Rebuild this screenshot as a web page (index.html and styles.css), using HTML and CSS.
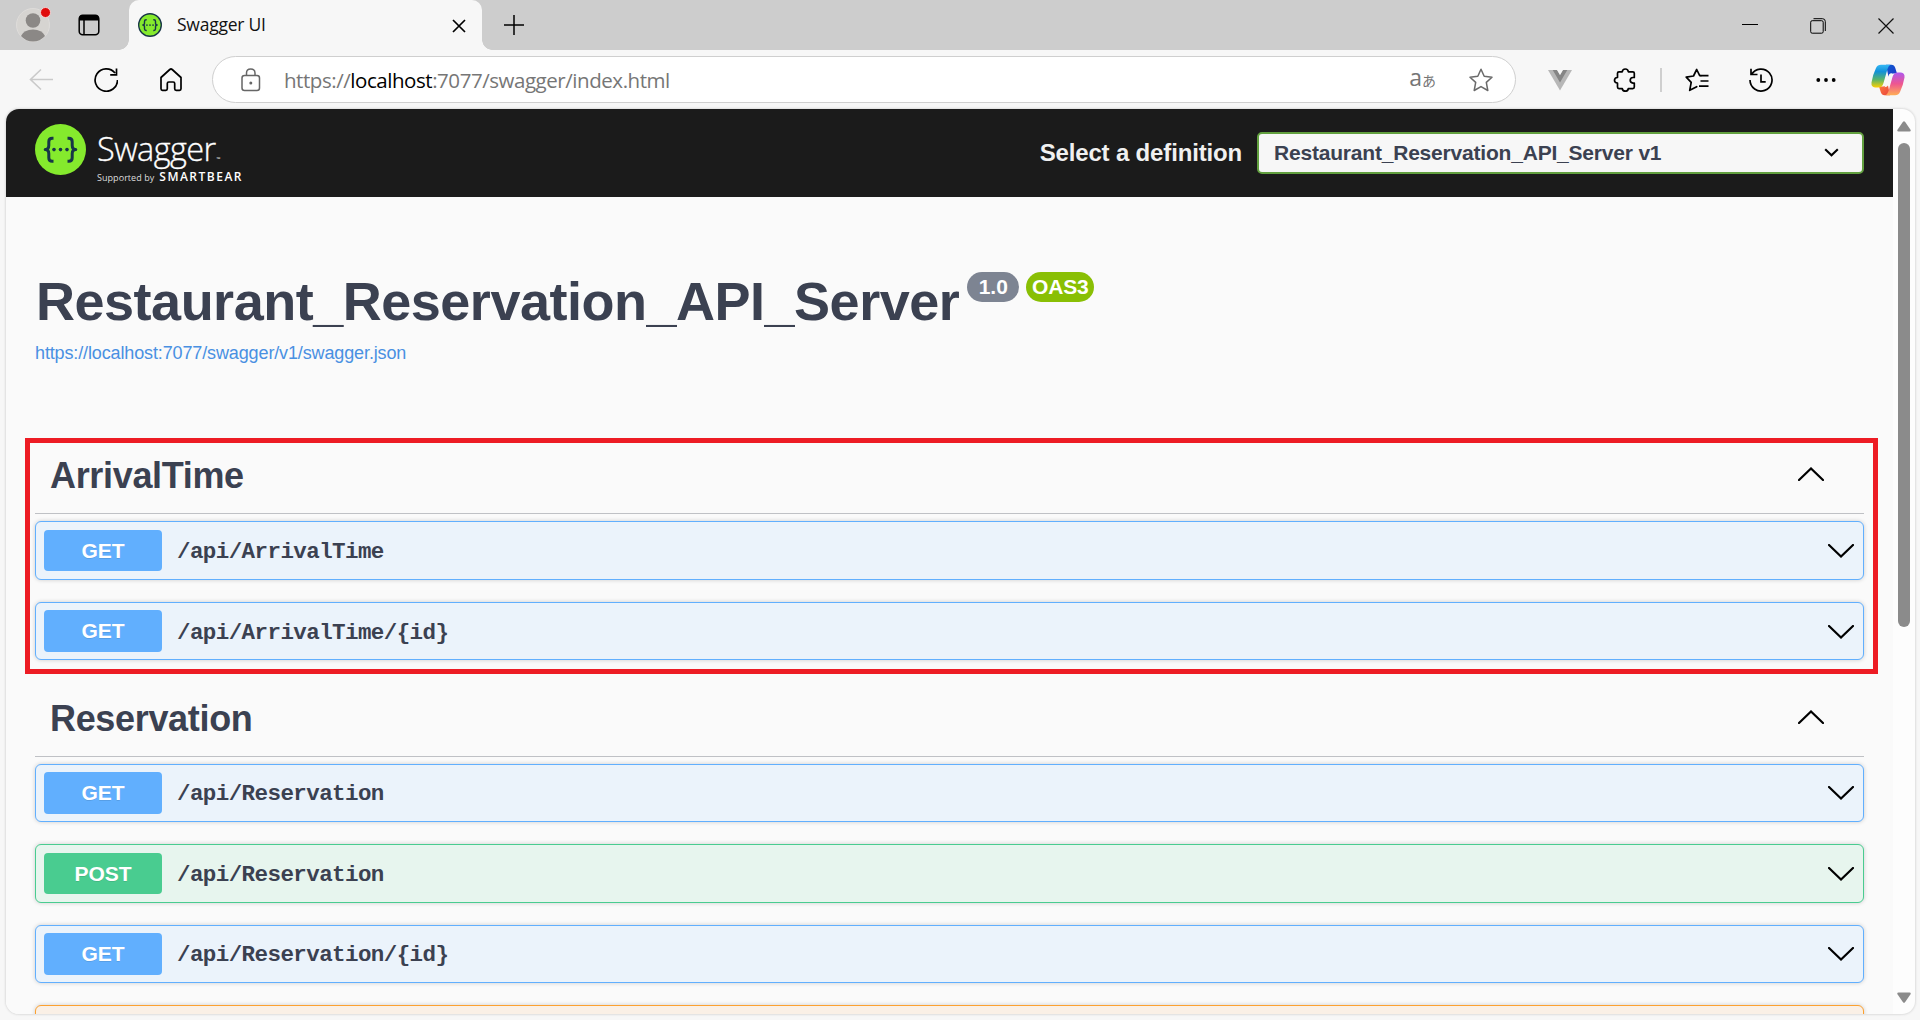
FILE: index.html
```html
<!DOCTYPE html>
<html lang="en">
<head>
<meta charset="utf-8">
<title>Swagger UI</title>
<link rel="stylesheet" href="styles.css">
</head>
<body>
<svg class="defs" width="0" height="0" aria-hidden="true">
  <symbol id="braces" viewBox="0 0 51 51">
    <g fill="none" stroke="#173647" stroke-width="3" stroke-linejoin="round">
      <path d="M18.5 14.2h-1.3q-3.4 0-3.4 3.6v3.4q0 4.3-3.6 4.3q3.6 0 3.6 4.3v3.9q0 3.600 3.400 3.600h1.3"/>
      <path d="M32.500 14.200h1.300q3.400 0 3.400 3.600v3.400q0 4.300 3.600 4.300q-3.600 0-3.600 4.300v3.900q0 3.600-3.400 3.600h-1.300"/>
    </g>
    <g fill="#173647"><circle cx="19" cy="25.600" r="1.800"/><circle cx="25.500" cy="25.600" r="1.800"/><circle cx="32" cy="25.600" r="1.800"/></g>
  </symbol>
  <symbol id="down" viewBox="0 0 26 14"><path d="M1 1l12 11.500L25 1" fill="none" stroke="#000" stroke-width="2.200" stroke-linecap="round"/></symbol>
  <symbol id="up" viewBox="0 0 26 14"><path d="M1 13L13 1.500 25 13" fill="none" stroke="#000" stroke-width="2.200" stroke-linecap="round"/></symbol>
</svg>

<header class="tabstrip">
  <div class="profile">
    <svg width="34" height="34" viewBox="0 0 34 34"><circle cx="17" cy="17" r="16.500" fill="#d6d4d1" stroke="#dedcda"/><circle cx="17" cy="12.500" r="7.300" fill="#8b8886"/><path d="M5 28q3-6.500 12-6.500T29 28q-5 5.500-12 5.500T5 28z" fill="#8b8886"/></svg>
    <span class="alert"></span>
  </div>
  <svg class="tabmenu" width="22" height="22" viewBox="0 0 22 22"><rect x="1.200" y="1.200" width="19.600" height="19.600" rx="3.500" fill="none" stroke="#000" stroke-width="1.500"/><path d="M1 6.500V4.500Q1 1 4.500 1h13Q21 1 21 4.500v2z"/><path d="M6 6v15" stroke="#000" stroke-width="1.500"/></svg>
  <div class="tab">
    <svg width="24" height="24" viewBox="0 0 51 51"><circle cx="25.500" cy="25.500" r="24" fill="#85ea2d" stroke="#173647" stroke-width="3"/><use href="#braces"/></svg>
    <span class="tab-title">Swagger UI</span>
    <svg class="tab-close" width="14" height="14" viewBox="0 0 14 14"><path d="M1 1l12 12M13 1L1 13" stroke="#000" stroke-width="1.700"/></svg>
  </div>
  <svg class="newtab" width="20" height="20" viewBox="0 0 20 20"><path d="M10 0v20M0 10h20" stroke="#000" stroke-width="1.500"/></svg>
  <div class="window-buttons">
    <svg width="16" height="16" viewBox="0 0 16 16"><path d="M0 6.500h16" stroke="#000"/></svg>
    <svg width="16" height="16" viewBox="0 0 16 16"><g fill="none" stroke="#000"><rect x=".7" y="2.700" width="12.500" height="12.500" rx="1.500"/><path d="M3.500 .7h9q2.800 0 2.800 2.800v9.500"/></g></svg>
    <svg width="16" height="16" viewBox="0 0 16 16"><path d="M.5.5l15 15M15.500.5l-15 15" stroke="#111" stroke-width="1.200"/></svg>
  </div>
</header>

<nav class="toolbar">
  <svg class="icon back" width="24" height="24" viewBox="0 0 24 24"><path d="M12 1.500L1.500 11.500 12 21.500M1.500 11.500H24" fill="none" stroke="#cacaca" stroke-width="1.600"/></svg>
  <svg class="icon" width="24" height="24" viewBox="0 0 24 24"><path d="M21 5A11.200 11.200 0 1 0 23.500 12M22.500.5v6.300h-6.300" fill="none" stroke="#000" stroke-width="1.700"/></svg>
  <svg class="icon" width="24" height="24" viewBox="0 0 24 24"><path d="M2 9.500L10.800 1.500q1.200-1 2.400 0L22 9.500v11.300q0 1.500-1.500 1.500h-3.300q-1.500 0-1.500-1.500v-5.300q0-1.500-1.500-1.500h-4.400q-1.500 0-1.500 1.500v5.300q0 1.500-1.500 1.500H3.500Q2 22.300 2 20.800z" fill="none" stroke="#000" stroke-width="1.700" stroke-linejoin="round"/></svg>
  <div class="address">
    <svg width="20" height="24" viewBox="0 0 20 24"><rect x="1" y="7.500" width="17.500" height="15" rx="2.500" fill="none" stroke="#666" stroke-width="1.500"/><path d="M5.500 7.500V5q0-4 4.200-4T14 5v2.500" fill="none" stroke="#666" stroke-width="1.500"/><circle cx="9.800" cy="15" r="1.500" fill="#666"/></svg>
    <span class="url">https://<b>localhost</b>:7077/swagger/index.html</span>
    <span class="translate"><span>a</span><span class="kana">あ</span></span>
    <svg class="fav" width="24" height="24" viewBox="0 0 24 24"><path d="M12 1.200l3.200 7 7.800 1-5.700 5.200 1.500 8.100L12 18.600l-6.800 3.900 1.500-8.100L1 9.200l7.800-1z" fill="none" stroke="#6a6a6a" stroke-width="1.500" stroke-linejoin="round"/></svg>
  </div>
  <svg class="icon vue" width="24" height="24" viewBox="0 0 24 24"><path d="M0 2h24L12 22.500z" fill="#b7b7b7"/><path d="M4.700 2H9l3 5 3-5h4.300L12 14.500z" fill="#858585"/><path d="M9 2h6l-3 5z" fill="#f7f7f7"/></svg>
  <svg class="icon" width="24" height="24" viewBox="0 0 24 24"><path d="M4.500 5.200Q4.500 3.800 6 3.800h3.300Q9.500 1 12.300 1t3 2.800h4.500q1.500 0 1.500 1.500v4.200h-1.300q-2.800.3-2.800 2.800t2.800 2.800h1.300v4q0 1.500-1.500 1.500h-4.500q-.2 2.600-3 2.600t-3-2.600H6q-1.500 0-1.500-1.500v-3.900Q1.500 14.900 1.500 12.300t3-2.800z" fill="none" stroke="#000" stroke-width="1.700" stroke-linejoin="round"/></svg>
  <span class="divider"></span>
  <svg class="icon favorites" width="24" height="24" viewBox="0 0 24 24"><path d="M15.700 7.700h-1L11.700 1.500 8.500 8l-7.300 1.200 5 5.200-1.500 7.900 7-3.600" fill="none" stroke="#000" stroke-width="1.700" stroke-linejoin="round" stroke-linecap="round"/><path d="M15.500 7.700H23.500M15.500 13h8M14 18.200h9.500" stroke="#000" stroke-width="1.700"/></svg>
  <svg class="icon history" width="24" height="24" viewBox="0 0 24 24"><path d="M2.500 6.500A11 11 0 1 1 1 12M2 .8V6.500h6.500M12 6.500v7.300h4.700" fill="none" stroke="#000" stroke-width="1.700"/></svg>
  <svg class="icon" width="24" height="24" viewBox="0 0 24 24"><circle cx="4.300" cy="12" r="1.900"/><circle cx="12" cy="12" r="1.900"/><circle cx="19.700" cy="12" r="1.900"/></svg>
  <svg class="copilot" width="34" height="32" viewBox="0 0 34 32">
    <defs>
      <linearGradient id="ca" x1="0" y1="0" x2="0" y2="1"><stop offset="0" stop-color="#35b8f5"/><stop offset=".3" stop-color="#1191d8"/><stop offset=".65" stop-color="#59b46a"/><stop offset="1" stop-color="#ffd000"/></linearGradient>
      <linearGradient id="cb" x1="0" y1="0" x2="0" y2="1"><stop offset="0" stop-color="#ae58ee"/><stop offset=".5" stop-color="#ee5690"/><stop offset="1" stop-color="#ffae55"/></linearGradient>
      <linearGradient id="cc" x1="0" y1="0" x2="1" y2="1"><stop offset="0" stop-color="#0c5fd0"/><stop offset="1" stop-color="#2133c9"/></linearGradient>
      <linearGradient id="cd" x1="0" y1="0" x2="1" y2="1"><stop offset="0" stop-color="#ff813f"/><stop offset="1" stop-color="#e9423c"/></linearGradient>
    </defs>
    <path d="M15 .8h5.500q2.700 0 3.700 3l1.800 5.700h-4q-3.500 0-4.500 3.500z" fill="url(#cc)"/>
    <path d="M19 31.200h-5.500q-2.700 0-3.700-3L8 22.500h4q3.500 0 4.500-3.500z" fill="url(#cd)"/>
    <path d="M10 .8h9.500q-2 1-3 4.200l-4 14q-1.200 4.500-5.200 4.500H4q-4-.5-3.500-5Q2 10 5 4 6.500.8 10 .8z" fill="url(#ca)"/>
    <path d="M24 31.200h-9.500q2-1 3-4.200l4-14q1.200-4.500 5.200-4.500H30q4 .5 3.500 5Q32 22 29 28q-1.500 3.200-5 3.200z" fill="url(#cb)"/>
    <path d="M18 10.500q1-1.500 3-1.500-1 1.500-1.500 3.500l-2.500 9q-1 1.800-3.500 1.800 1-1.300 1.500-3.300z" fill="#f7f7f7"/>
  </svg>
</nav>

<div class="page">
  <main class="document">
    <div class="topbar">
      <svg class="logo-mark" width="51" height="51" viewBox="0 0 51 51"><circle cx="25.500" cy="25.500" r="25.500" fill="#85ea2d"/><use href="#braces"/></svg>
      <div class="wordmark">
        <div class="name"><span class="swagger">Swagger</span><span class="tm">™</span></div>
        <div class="byline"><span class="supported">Supported by</span><span class="smartbear">SMARTBEAR</span></div>
      </div>
      <span class="select-label">Select a definition</span>
      <div class="select"><span>Restaurant_Reservation_API_Server v1</span><svg width="15" height="9" viewBox="0 0 15 9"><path d="M1.200 1.200l6.300 6 6.300-6" fill="none" stroke="#000" stroke-width="2.100"/></svg></div>
    </div>

    <section class="info">
      <h1>Restaurant_Reservation_API_Server</h1>
      <div class="badges"><span class="badge version">1.0</span><span class="badge oas">OAS3</span></div>
      <a class="spec-link">https://localhost:7077/swagger/v1/swagger.json</a>
    </section>

    <section class="group highlighted">
      <h2>ArrivalTime<svg width="26" height="14"><use href="#up"/></svg></h2>
      <div class="operation get"><span class="method">GET</span><span class="path">/api/ArrivalTime</span><svg width="26" height="14"><use href="#down"/></svg></div>
      <div class="operation get"><span class="method">GET</span><span class="path">/api/ArrivalTime/{id}</span><svg width="26" height="14"><use href="#down"/></svg></div>
    </section>
    <section class="group second">
      <h2>Reservation<svg width="26" height="14"><use href="#up"/></svg></h2>
      <div class="operation get"><span class="method">GET</span><span class="path">/api/Reservation</span><svg width="26" height="14"><use href="#down"/></svg></div>
      <div class="operation post"><span class="method">POST</span><span class="path">/api/Reservation</span><svg width="26" height="14"><use href="#down"/></svg></div>
      <div class="operation get"><span class="method">GET</span><span class="path">/api/Reservation/{id}</span><svg width="26" height="14"><use href="#down"/></svg></div>
      <div class="operation put"></div>
    </section>
  </main>
  <aside class="scrollbar">
    <svg width="14" height="11" viewBox="0 0 14 11"><path d="M6 .8q1-1 2 0l5.500 8q.8 1.700-1 1.700h-11q-1.800 0-1-1.700z" fill="#8b8b8b"/></svg>
    <div class="thumb"></div>
    <svg class="arrow-down" width="14" height="11" viewBox="0 0 14 11"><path d="M6 10.200q1 1 2 0l5.500-8q.8-1.700-1-1.700h-11q-1.800 0-1 1.700z" fill="#8b8b8b"/></svg>
  </aside>
</div>
</body>
</html>
```
FILE: styles.css
```css
* { box-sizing: border-box; }
body {
  margin: 0;
  width: 1920px;
  height: 1020px;
  overflow: hidden;
  background: #f7f7f7;
  font-family: "Liberation Sans", Arial, sans-serif;
  color: #3b4151;
}
svg { display: block; flex: none; }
.defs { position: absolute; }

/* Browser tab strip */
.tabstrip { display: flex; align-items: center; height: 50px; background: #cdcdcd; padding-left: 16px; }
.profile { position: relative; width: 34px; height: 34px; }
.alert {
  position: absolute; left: 24px; top: -1px; width: 11px; height: 11px;
  border-radius: 50%; background: #e00b0b; border: 1px solid #f3d5d5;
}
.tabmenu { margin-left: 28px; }
.tab {
  position: relative; display: flex; align-items: center; align-self: stretch;
  width: 353px; margin-left: 29px; padding-left: 9px;
  background: #f7f7f7; border-radius: 10px 10px 0 0;
}
.tab::before, .tab::after { content: ""; position: absolute; bottom: 0; width: 10px; height: 10px; }
.tab::before { left: -10px; background: radial-gradient(circle at 0 0, transparent 9.500px, #f7f7f7 10px); }
.tab::after { right: -10px; background: radial-gradient(circle at 100% 0, transparent 9.500px, #f7f7f7 10px); }
.tab-title { margin: 0 0 2px 15px; font: 17.500px "Open Sans", sans-serif; color: #111; letter-spacing: -.25px; white-space: nowrap; }
.tab-close { margin: 2px 16px 0 auto; }
.newtab { margin-left: 22px; }
.window-buttons { display: flex; gap: 52px; margin: 1px 26px 0 auto; }

/* Toolbar */
.toolbar { display: flex; align-items: center; height: 59px; padding-left: 29px; }
.icon { margin-left: 41px; }
.icon.back { margin-left: 0; }
.address {
  display: flex; align-items: center; width: 1304px; height: 47px; margin-left: 29px; padding-left: 28px;
  background: #fff; border: 1px solid #cfcfcf; border-radius: 24px;
}
.url { margin-left: 23px; font: 20.500px "Open Sans", sans-serif; letter-spacing: -.45px; color: #767676; white-space: nowrap; }
.url b { font-weight: 400; color: #000; }
.translate { display: flex; align-items: baseline; margin: -3px 0 0 auto; font: 23px/26px "Open Sans", sans-serif; color: #767676; }
.kana { font: 14px/24px "Noto Sans CJK JP", sans-serif; }
.fav { margin: 0 22px 0 33px; }
.icon.vue { margin-left: 32px; }
.divider { width: 2px; height: 24px; margin-left: 23px; background: #cfcfcf; }
.icon.favorites { margin-left: 23px; }
.icon.history { margin-left: 40px; }
.copilot { margin-left: 33px; }

/* Web page frame */
.page {
  display: flex; width: 1909px; height: 905px; margin-left: 6px; overflow: hidden;
  background: #fdfdfd; border-radius: 13px; box-shadow: 0 0 2px 1px #dedede;
}
.document { width: 1887px; background: #fafafa; overflow: hidden; }
.topbar { display: flex; height: 88px; padding: 0 29px; background: #1b1b1b; color: #fff; }
.logo-mark { margin-top: 15px; }
.wordmark { margin: 15px auto 0 11px; font-family: "Open Sans", sans-serif; white-space: nowrap; }
.name { display: flex; align-items: baseline; height: 49px; line-height: 49px; }
.swagger { font-size: 32.500px; font-weight: 300; letter-spacing: -.6px; -webkit-text-stroke: .3px #fff; }
.tm { font-size: 5px; margin-left: 1px; }
.byline { display: flex; align-items: baseline; line-height: 14px; margin-top: -3px; }
.supported { font-size: 9px; letter-spacing: .05px; color: #ddd; }
.smartbear { margin-left: 5px; font-size: 12px; font-weight: 600; letter-spacing: 1.500px; }
.select-label { margin: 29px 15px 0 0; font-size: 24px; line-height: 30px; font-weight: 700; letter-spacing: -.16px; color: #f0f0f0; white-space: nowrap; }
.select {
  display: flex; align-items: center; justify-content: space-between; width: 607px; height: 42px; margin-top: 23px;
  padding: 0 23px 1px 15px; border: 2px solid #62a03f; border-radius: 5px;
  background: #f7f7f7; color: #3b4151; font-size: 21px; font-weight: 700; letter-spacing: -.2px; white-space: nowrap;
}

/* API info */
.info { display: grid; grid-template-columns: max-content 1fr; padding: 75px 29px 0; height: 241px; align-content: start; }
h1 { margin: -1px 0 1px 1px; font-size: 54px; line-height: 60px; font-weight: 700; letter-spacing: -.49px; }
.badges { display: flex; gap: 7px; margin-left: 8px; }
.badge { height: 30px; border-radius: 15px; background: #7d8492; color: #fff; font-size: 21px; line-height: 29px; font-weight: 700; text-align: center; }
.version { width: 52px; }
.oas { width: 68px; background: #89bf04; letter-spacing: -.2px; }
.spec-link { font-size: 18px; line-height: 22px; letter-spacing: -.13px; color: #4990e2; margin-top: 10px; }

/* Operation groups */
.group { margin: 0 19px; padding: 0 10px; width: 1853px; }
.highlighted { border: 5px solid #ed1c24; padding: 0 9px 0 5px; height: 236px; }
h2 {
  display: flex; align-items: center; justify-content: space-between;
  height: 71px; margin: 0 0 7.200px; padding: 2px 40px 6px 15px;
  border-bottom: 1px solid #bfc1c5; font-size: 36px; line-height: 42px; font-weight: 700; letter-spacing: -.33px;
}
h2 svg { margin-bottom: 5px; }
.second { padding-right: 14px; padding-top: 12px; }
.second h2 { margin-bottom: 6.600px; }
.operation {
  display: flex; align-items: center; height: 58.700px; margin-bottom: 21.800px; padding: 0 9px 0 8px;
  border: 1px solid #61affe; border-radius: 6px; background: #ebf3fb; box-shadow: 0 0 4px rgba(0, 0, 0, .19);
}
.operation svg { margin-top: 1px; }
.method {
  width: 118px; height: 41.500px; border-radius: 4px; background: #61affe; color: #fff;
  font-size: 21px; line-height: 41px; font-weight: 700; text-align: center; text-shadow: 0 1px 0 rgba(0, 0, 0, .1);
}
.path { flex: 1; margin: 3px 0 0 15px; font: 700 22.500px "Liberation Mono", monospace; letter-spacing: -.58px; white-space: nowrap; }
.post { border-color: #49cc90; background: #e7f5ee; }
.post .method { background: #49cc90; }
.put { border-color: #fca130; background: #faf0e6; }

/* Scrollbar */
.scrollbar { display: flex; flex-direction: column; align-items: center; flex: 1; padding: 12px 0 11px; }
.thumb { width: 12px; height: 484px; margin-top: 11px; border-radius: 6px; background: #8b8b8b; }
.arrow-down { margin-top: auto; }
```
